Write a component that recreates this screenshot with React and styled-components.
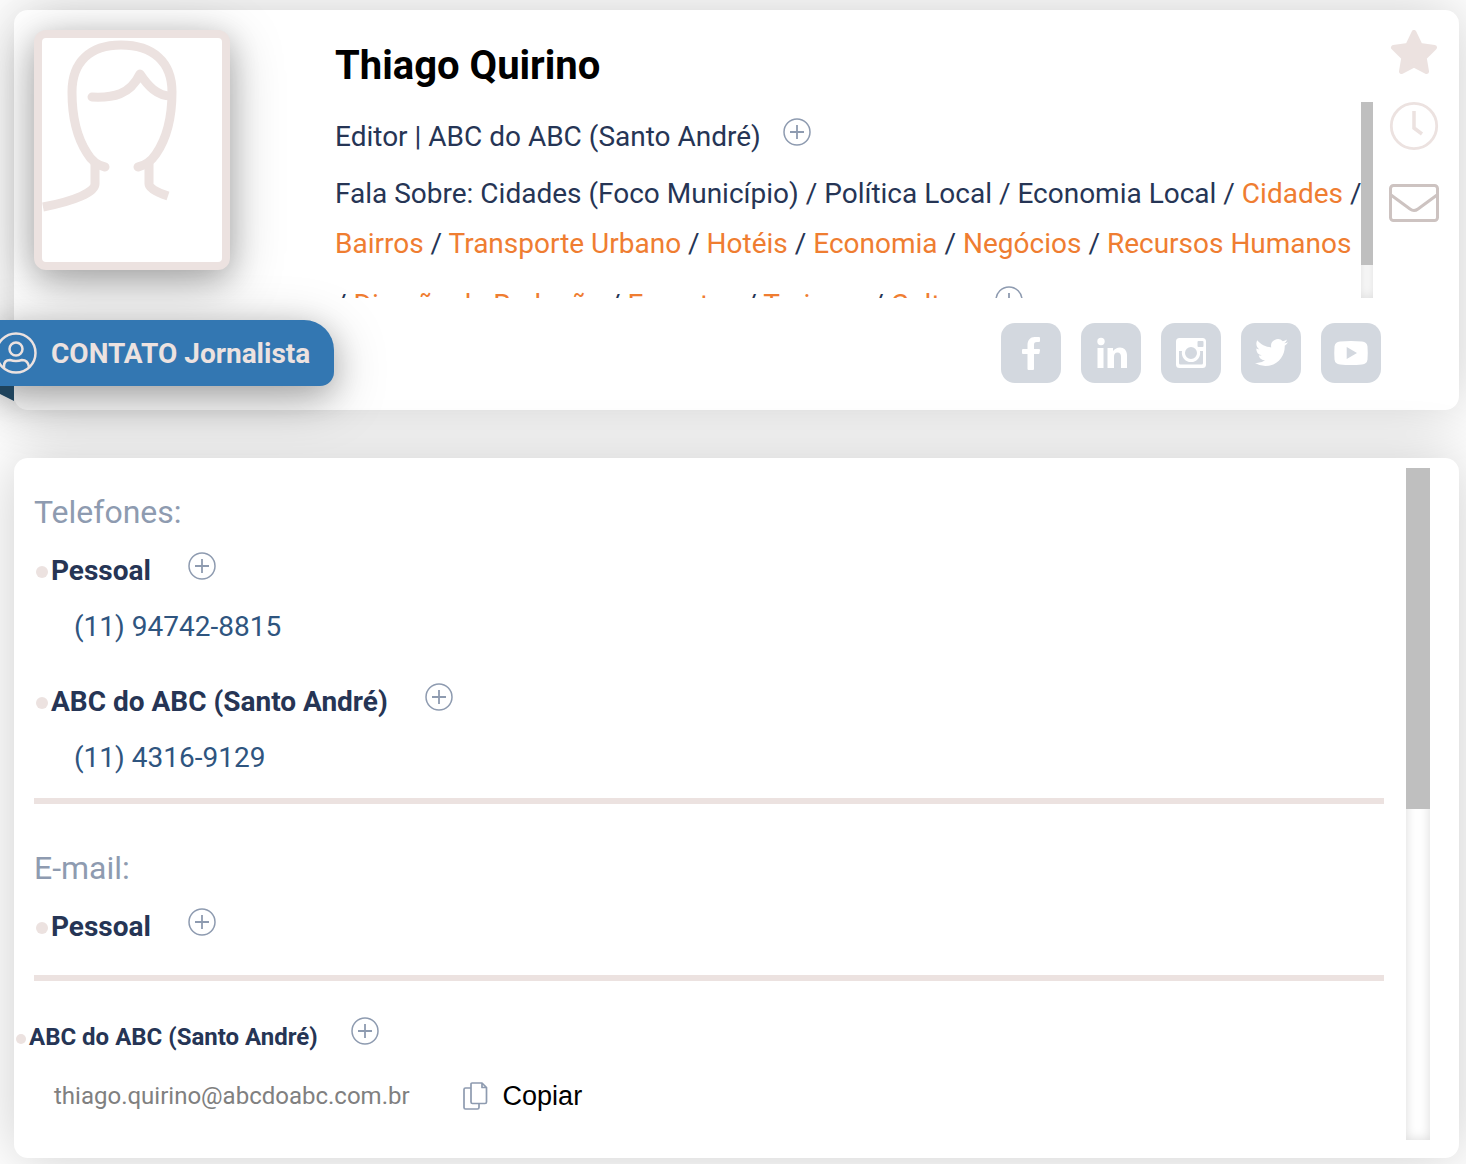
import React from 'react';
import styled, { createGlobalStyle } from 'styled-components';

const topics = [
    { name: 'Cidades (Foco Município)' },
    { name: 'Política Local' },
    { name: 'Economia Local' },
    { name: 'Cidades', link: true },
    { name: 'Bairros', link: true },
    { name: 'Transporte Urbano', link: true },
    { name: 'Hotéis', link: true },
    { name: 'Economia', link: true },
    { name: 'Negócios', link: true },
    { name: 'Recursos Humanos', link: true },
    { name: 'Direção de Redação', link: true },
    { name: 'Esportes', link: true },
    { name: 'Turismo', link: true },
    { name: 'Cultura', link: true },
];

const phones = [
    { id: 1, label: 'Pessoal', number: '(11) 94742-8815' },
    { id: 2, label: 'ABC do ABC (Santo André)', number: '(11) 4316-9129' },
];

const socials = [
    {
        name: 'Facebook',
        shape: <path d="M26.500 46V31H22q-1 0-1-1v-3q0-1 1-1h4.500v-4c0-5 3-8 7-8H38q1 0 1 1v3q0 1-1 1h-2c-2.500 0-3 1-3 3v4h5q1 0 1 1l-.5 3q0 1-1 1H33v15q0 1-1 1h-4.500q-1 0-1-1z" />,
    },
    {
        name: 'LinkedIn',
        shape: (
            <>
                <circle cx="20" cy="18.500" r="3.700" />
                <path d="M16.500 25h6v20h-6zM26.500 25H32v3c2-2 4-3.500 7-3.500 4 0 7 3 7 7.500v13h-6V34c0-3-1-4.500-3.500-4.500S33 31 33 34v11h-6.500z" />
            </>
        ),
    },
    {
        name: 'Instagram',
        shape: (
            <path
                fillRule="evenodd"
                d="M18.500 15h23a3.500 3.500 0 0 1 3.500 3.500v23a3.500 3.500 0 0 1-3.500 3.500h-23a3.500 3.500 0 0 1-3.500-3.500v-23a3.500 3.500 0 0 1 3.500-3.500zM37.500 18a1 1 0 0 0-1 1v4a1 1 0 0 0 1 1h4a1 1 0 0 0 1-1v-4a1 1 0 0 0-1-1zM18 28v12a1.500 1.500 0 0 0 1.500 1.500h21A1.500 1.500 0 0 0 42 40V28h-3a9.200 9.200 0 1 1-18 0zM30 24a6 6 0 1 0 0 12 6 6 0 0 0 0-12z"
            />
        ),
    },
    {
        name: 'Twitter',
        shape: (
            <path
                transform="translate(14 13) scale(1.38)"
                d="M23.950 4.570a10 10 0 0 1-2.820.77 4.960 4.960 0 0 0 2.160-2.720c-.95.55-2 .95-3.130 1.180a4.920 4.920 0 0 0-8.380 4.480C7.690 8.090 4.070 6.130 1.640 3.160a4.820 4.820 0 0 0-.67 2.470c0 1.710.87 3.210 2.190 4.100a4.900 4.900 0 0 1-2.230-.62v.06a4.920 4.920 0 0 0 3.950 4.830 5 5 0 0 1-2.210.08 4.940 4.940 0 0 0 4.600 3.420A9.870 9.870 0 0 1 0 19.540a14 14 0 0 0 7.550 2.210c9.050 0 14-7.500 14-13.980 0-.21 0-.42-.02-.63a9.940 9.940 0 0 0 2.420-2.570z"
            />
        ),
    },
    {
        name: 'YouTube',
        shape: (
            <path
                fillRule="evenodd"
                d="M19 18.500q11-1 22 0 5 .5 5.500 5 .5 6.500 0 13-.5 4.500-5.500 5-11 1-22 0-5-.5-5.500-5-.5-6.500 0-13 .5-4.500 5.500-5zM25.700 24v12l10.300-6z"
            />
        ),
    },
];

const PlusIcon = () => (
    <svg width="28" height="28" viewBox="0 0 28 28" fill="none" stroke="#8e9bb0" aria-hidden="true">
        <circle cx="14" cy="14" r="13" strokeWidth="1.500" />
        <path d="M14 7v14M7 14h14" strokeWidth="1.800" />
    </svg>
);

const Avatar = () => (
    <AvatarFrame>
        <svg width="180" height="224" viewBox="0 0 180 224" fill="none" stroke="#ece2e0" strokeWidth="9" role="img" aria-label="Foto">
            <path
                strokeLinecap="round"
                d="M63 129C54 127 49 122 45 115C34 98 30 75 30 54C30 24 48 7 79 7C111 7 130 24 130 54C130 80 125 100 114 116C110 122 105 127 96 129"
            />
            <path strokeLinecap="round" strokeLinejoin="round" d="M50 59C71 60 88 57 98 36C106 48 115 58 129 58" />
            <path d="M53 124V146C53 154 33 163 1 169M107 124V146C107 150 114 154 126 158" />
        </svg>
    </AvatarFrame>
);

const App = () => {
    return (
        <>
            <GlobalStyle />
            <Page>
                <ProfileCard>
                    <ProfileTop>
                        <Avatar />
                        <Info>
                            <Name>Thiago Quirino</Name>
                            <Scroller>
                                <ScrollContent>
                                    <Role>
                                        Editor | ABC do ABC (Santo André)
                                        <AddButton type="button" aria-label="Mais sobre o cargo">
                                            <PlusIcon />
                                        </AddButton>
                                    </Role>
                                    <Topics>
                                        Fala Sobre:{' '}
                                        {topics.map((topic, i) => (
                                            <React.Fragment key={topic.name}>
                                                {i > 0 ? ' / ' : null}
                                                {topic.link ? <TopicLink href="#">{topic.name}</TopicLink> : topic.name}
                                            </React.Fragment>
                                        ))}
                                        <InlineAddButton type="button" aria-label="Mais assuntos">
                                            <PlusIcon />
                                        </InlineAddButton>
                                    </Topics>
                                </ScrollContent>
                                <Track $width={12}>
                                    <Thumb $height={163} />
                                </Track>
                            </Scroller>
                        </Info>
                        <Actions>
                            <ActionButton type="button" aria-label="Favorito">
                                <svg width="50" height="46" viewBox="0 0 50 46" fill="#ece2e0" stroke="#ece2e0" strokeWidth="5" strokeLinejoin="round">
                                    <path d="M25 2.500L31.200 15.500L45.500 17.500L35.200 27.700L37.500 41.500L25 35L12.500 41.500L14.800 27.700L4.500 17.500L18.800 15.500Z" />
                                </svg>
                            </ActionButton>
                            <ActionButton type="button" aria-label="Histórico">
                                <svg width="50" height="50" viewBox="0 0 50 50" fill="none" stroke="#ece2e0">
                                    <circle cx="25" cy="25" r="22.700" strokeWidth="2.800" />
                                    <path d="M25 10V27L33 33" strokeWidth="3.500" />
                                </svg>
                            </ActionButton>
                            <ActionButton type="button" aria-label="Mensagem">
                                <svg width="50" height="38" viewBox="0 0 50 38" fill="none" stroke="#cdc3c1" strokeWidth="3" strokeLinejoin="round">
                                    <rect x="1.500" y="1.500" width="47" height="35" rx="3" />
                                    <path d="M2 11L21 25Q25 28 29 25L48 11" />
                                </svg>
                            </ActionButton>
                        </Actions>
                    </ProfileTop>
                    <ProfileBottom>
                        <Ribbon>
                            <svg width="42" height="42" viewBox="0 0 42 42" fill="none" stroke="#ece2e0" strokeWidth="2.500" aria-hidden="true">
                                <circle cx="21" cy="21" r="19.500" />
                                <circle cx="21" cy="17" r="6.500" />
                                <path d="M9 36V34Q9 28 15 28Q21 30 27 28Q33 28 34 35" />
                            </svg>
                            CONTATO Jornalista
                        </Ribbon>
                        <SocialList>
                            {socials.map((item) => (
                                <SocialLink key={item.name} href="#" aria-label={item.name}>
                                    <svg width="60" height="60" viewBox="0 0 60 60" fill="#fff">
                                        {item.shape}
                                    </svg>
                                </SocialLink>
                            ))}
                        </SocialList>
                    </ProfileBottom>
                </ProfileCard>

                <ContactCard>
                    <ContactContent>
                        <Section>
                            <SectionTitle>Telefones:</SectionTitle>
                            {phones.map((phone) => (
                                <Entry key={phone.id}>
                                    <Label>
                                        <Bullet $size={12} />
                                        {phone.label}
                                        <AddButton type="button" aria-label={`Mais sobre ${phone.label}`}>
                                            <PlusIcon />
                                        </AddButton>
                                    </Label>
                                    <Phone href="#">{phone.number}</Phone>
                                </Entry>
                            ))}
                        </Section>
                        <Divider />
                        <Section $email>
                            <SectionTitle>E-mail:</SectionTitle>
                            <Label>
                                <Bullet $size={12} />
                                Pessoal
                                <AddButton type="button" aria-label="Mais sobre e-mail pessoal">
                                    <PlusIcon />
                                </AddButton>
                            </Label>
                        </Section>
                        <Divider />
                        <WorkEmail>
                            <Label $small>
                                <Bullet $size={10} />
                                ABC do ABC (Santo André)
                                <AddButton type="button" aria-label="Mais sobre e-mail profissional">
                                    <PlusIcon />
                                </AddButton>
                            </Label>
                            <EmailRow>
                                <span>thiago.quirino@abcdoabc.com.br</span>
                                <CopyButton type="button">
                                    <svg width="26" height="28" viewBox="0 0 26 28" fill="none" stroke="#8e9bb0" strokeWidth="1.700" strokeLinejoin="round" aria-hidden="true">
                                        <path d="M9 1H19L23.500 5.500V20A1.500 1.500 0 0 1 22 21.500H9.500A1.500 1.500 0 0 1 8 20V2A1 1 0 0 1 9 1ZM19 1V5.500H23.500" />
                                        <path d="M8 6H2.500A1.500 1.500 0 0 0 1 7.500V25.500A1.500 1.500 0 0 0 2.500 27H14.500A1.500 1.500 0 0 0 16 25.500V21.500" />
                                    </svg>
                                    Copiar
                                </CopyButton>
                            </EmailRow>
                        </WorkEmail>
                    </ContactContent>
                    <Track $width={24}>
                        <Thumb $height={341} />
                    </Track>
                </ContactCard>
            </Page>
        </>
    );
};

export default App;



const GlobalStyle = createGlobalStyle`
    * {
        box-sizing: border-box;
    }

    body{
        margin: 0;
        background: #fff;
        color: #263555;
        font-family: Roboto, sans-serif;
        font-size: 28px;
    }

    h1, h2, h3, p{
        margin: 0;
    }

    a{
        color: inherit;
        text-decoration: none;
    }

    button{
        padding: 0;
        border: none;
        background: none;
        cursor: pointer;
    }

    svg{
        display: block;
        flex-shrink: 0;
    }
`;

const Page = styled.main`
    display: flex;
    flex-direction: column;
    gap: 48px;
    padding: 10px 7px 6px 14px;
    overflow: hidden;
`;

const Card = styled.section`
    border-radius: 14px;
    background: #fff;
    box-shadow: 0 0 60px rgb(0 0 0 / 20%);
`;

const ProfileCard = styled(Card)`
    display: flex;
    flex-direction: column;
    gap: 22px;
    padding: 20px 20px 24px;
`;

const ProfileTop = styled.div`
    display: flex;
    align-items: flex-start;
`;

const AvatarFrame = styled.div`
    flex-shrink: 0;
    margin-right: 105px;
    border: 8px solid #ece2e0;
    border-radius: 12px;
    background: #fff;
    box-shadow: 0 8px 30px rgb(0 0 0 / 20%), 0 12px 54px rgb(0 0 0 / 26%);
`;

const Info = styled.div`
    flex: 1;
    min-width: 0;
    margin-right: 16px;
`;

const Name = styled.h1`
    color: #000;
    font-size: 40px;
    font-weight: 700;
    line-height: 72px;
`;

const Scroller = styled.div`
    display: flex;
    height: 196px;
`;

const ScrollContent = styled.div`
    flex: 1;
    min-width: 0;
    padding-top: 10px;
    overflow-x: hidden;
    overflow-y: auto;
    scrollbar-width: none;
`;

const Track = styled.div`
    flex-shrink: 0;
    width: ${(props) => props.$width}px;
    background: #fff;
    box-shadow: inset 0 0 12px rgb(0 0 0 / 15%);
`;

const Thumb = styled.div`
    height: ${(props) => props.$height}px;
    background: #bfbfbf;
`;

const AddButton = styled.button`
    padding-bottom: 10px;
`;

const InlineAddButton = styled.button`
    display: inline-block;
    margin-left: 15px;
    padding-top: 17px;
    vertical-align: baseline;
`;

const Role = styled.p`
    display: flex;
    align-items: center;
    gap: 22px;
    margin-bottom: 7px;
    line-height: 50px;
`;

const Topics = styled.p`
    margin-right: -2px;
    line-height: 50px;
`;

const TopicLink = styled.a`
    color: #ef7d31;
`;

const Actions = styled.div`
    display: flex;
    flex-direction: column;
    width: 50px;
    gap: 33px;
`;

const ActionButton = styled.button`
    &:first-child{
        margin-bottom: -8px;
    }
`;

const ProfileBottom = styled.div`
    display: flex;
    align-items: flex-start;
    justify-content: space-between;
`;

const Ribbon = styled.h2`
    position: relative;
    display: flex;
    align-items: center;
    gap: 14px;
    height: 66px;
    margin: 0 0 0 -39px;
    padding-right: 24px;
    border-radius: 0 30px 14px 0;
    background: #3377b2;
    color: #ece2e0;
    font-size: 28px;
    font-weight: 700;
    box-shadow: 0 8px 30px rgb(0 0 0 / 20%), 0 12px 54px rgb(0 0 0 / 26%);

    /* folded end behind the card */
    &::after{
        content: '';
        position: absolute;
        top: 100%;
        left: -11px;
        width: 30px;
        height: 15px;
        background: #1f435c;
        clip-path: polygon(0 0, 100% 0, 100% 100%);
    }
`;

const SocialList = styled.nav`
    display: flex;
    gap: 20px;
    margin: 3px 58px 0 0;
`;

const SocialLink = styled.a`
    border-radius: 14px;
    background: #d3d8df;
`;

const ContactCard = styled(Card)`
    display: flex;
    padding: 10px 29px 18px 20px;
`;

const ContactContent = styled.div`
    flex: 1;
    min-width: 0;
    padding: 14px 22px 16px 0;
`;

const Section = styled.div`
    padding: ${(props) => props.$email ? '34px 0 21px' : '0 0 12px'};
`;

const SectionTitle = styled.h2`
    color: #8e9bb0;
    font-size: 32px;
    font-weight: 400;
    line-height: 60px;
`;

const Entry = styled.div`
    & + &{
        margin-top: 18px;
    }
`;

const Label = styled.h3`
    display: flex;
    align-items: center;
    height: 56px;
    font-size: ${(props) => props.$small ? '24px' : '28px'};
    font-weight: 700;

    button{
        margin-left: ${(props) => props.$small ? '33px' : '37px'};
        padding-bottom: ${(props) => props.$small ? '12px' : '8px'};
    }
`;

const Bullet = styled.span`
    width: ${(props) => props.$size}px;
    height: ${(props) => props.$size}px;
    margin: 4px 3px 0 2px;
    border-radius: 50%;
    background: #ece2e0;
`;

const Phone = styled.a`
    display: block;
    margin-top: 1px;
    padding-left: 40px;
    color: #2f557f;
    line-height: 56px;
`;

const Divider = styled.hr`
    height: 6px;
    margin: 0;
    border: none;
    background: #ece2e0;
`;

const WorkEmail = styled.div`
    margin-left: -20px;
    padding-top: 28px;
`;

const EmailRow = styled.div`
    display: flex;
    align-items: center;
    gap: 53px;
    height: 56px;
    margin-top: 3px;
    padding-left: 40px;
    color: #808080;
    font-size: 24px;
`;

const CopyButton = styled.button`
    display: flex;
    align-items: center;
    gap: 14px;
    color: #000;
    font-family: "Liberation Sans", Arial, sans-serif;
    font-size: 27px;
`;
